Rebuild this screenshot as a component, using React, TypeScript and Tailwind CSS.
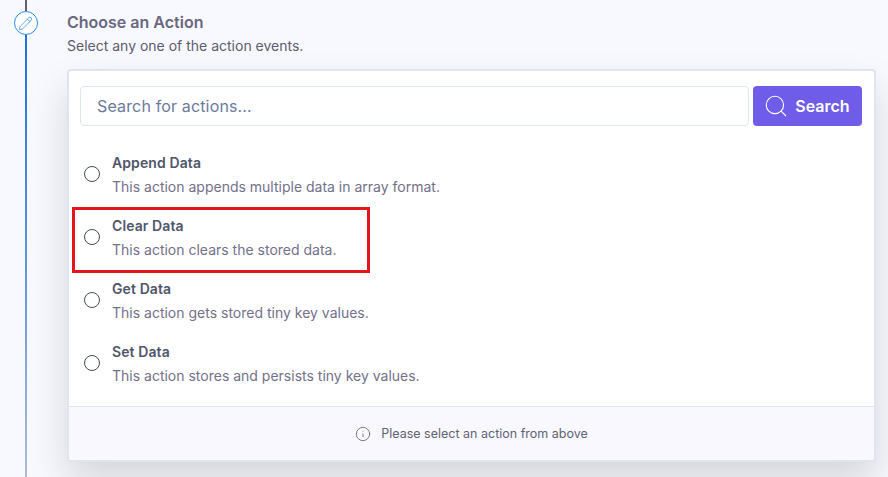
import { Pencil, Search, Info } from "lucide-react";

const actions = [
  { title: "Append Data", desc: "This action appends multiple data in array format." },
  { title: "Clear Data", desc: "This action clears the stored data.", marked: true },
  { title: "Get Data", desc: "This action gets stored tiny key values." },
  { title: "Set Data", desc: "This action stores and persists tiny key values." },
];

export default function App() {
  return (
    <div className="flex h-[477px] w-[888px] overflow-hidden bg-[#f8f9fe] font-['Inter',sans-serif]">
      <div className="relative flex w-[67px] shrink-0 flex-col items-center pr-[16px]">
        <div className="h-[11px] w-[2px] bg-[#5f5d77]" />
        <div className="flex h-[24px] w-[24px] shrink-0 items-center justify-center rounded-full border border-[#2b8af0] bg-white text-[#1f7ae0]">
          <Pencil size={15} strokeWidth={1.1} />
        </div>
        <div className="w-[2px] flex-1 bg-linear-to-b from-[#1a70dc] via-[#5b93dd] to-[#adbbd2]" />
      </div>
      <div className="flex-1 pt-[12px]">
        <h2 className="text-[16px] leading-[20px] font-semibold text-[#6a6780]">Choose an Action</h2>
        <p className="mt-[4px] text-[14px] leading-[20px] text-[#5d5b70]">Select any one of the action events.</p>
        <div className="mt-[13px] w-[809px] overflow-hidden rounded-[4px] border-2 border-[#dfe4ef] bg-white shadow-[0_20px_40px_rgba(0,0,0,0.14)]">
          <div className="flex gap-[4px] px-[11px] pt-[15px]">
            <input
              readOnly
              placeholder="Search for actions..."
              className="h-[40px] w-[669px] rounded-[4px] border border-[#dfe5f2] bg-white px-[16px] text-[16px] tracking-[0.15px] text-[#5f6f94] placeholder:text-[#6d7a9c]"
            />
            <button className="flex h-[40px] w-[109px] items-center justify-center gap-[6px] rounded-[4px] bg-[#6f5ce8] pr-[2px] text-[16px] font-semibold text-white">
              <Search size={26} strokeWidth={1} />
              Search
            </button>
          </div>
          <div className="flex flex-col px-[15px] pt-[15px] pb-[13px]">
            {actions.map((a) => (
              <div key={a.title} className="relative flex h-[63px] items-center gap-[12px] pt-[2px]">
                <span className="h-[16px] w-[16px] shrink-0 rounded-full border border-[#464c5c] bg-white" />
                <div className="mt-[3px]">
                  <div className="text-[14px] leading-[20px] font-semibold tracking-[0.1px] text-[#4f566a]">{a.title}</div>
                  <div className="mt-[4px] text-[14px] leading-[20px] text-[#73708a]">{a.desc}</div>
                </div>
                {a.marked && (
                  <div className="absolute top-[3px] left-[-12px] h-[66px] w-[298px] border-[3px] border-[#e8141c]" />
                )}
              </div>
            ))}
          </div>
          <div className="flex h-[54px] items-center justify-center gap-[10px] border-t border-[#dfe5f2] bg-[#f8f8fe] pt-[1px] text-[12.5px] text-[#5f6375]">
            <Info size={16} strokeWidth={1.25} />
            Please select an action from above
          </div>
        </div>
      </div>
    </div>
  );
}
